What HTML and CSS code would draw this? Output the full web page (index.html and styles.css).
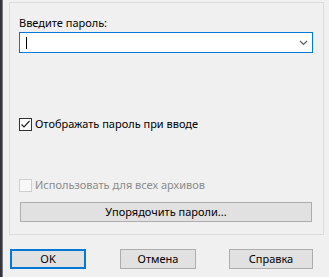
FILE: index.html
```html
<!DOCTYPE html>
<html>
    <head>
        <meta charset="UTF-8">
        <meta name="viewport" content="width=device-width, initial-scale=1.0">
        <link rel="stylesheet" href="styles.css">
    </head>
    <body>
        <div class="edge"></div>
        <div class="dialog">
            <div class="panel">
                <div class="label">Введите пароль:</div>
                <div class="combo">
                    <span class="caret"></span>
                    <svg class="chevron" width="9" height="6" viewBox="0 0 9 6">
                        <path d="M1 1 L4.5 4.5 L8 1" fill="none" stroke="#5a5a5a" stroke-width="1.1"/>
                    </svg>
                </div>
                <div class="checkRow">
                    <svg class="box" width="13" height="13" viewBox="0 0 13 13">
                        <rect x="0.5" y="0.5" width="12" height="12" fill="#fff" stroke="#333"/>
                        <path d="M2.5 6.5 L5 9 L10.5 3" fill="none" stroke="#222" stroke-width="1.2"/>
                    </svg>
                    <span>Отображать пароль при вводе</span>
                </div>
                <div class="checkRow disabled">
                    <svg class="box" width="13" height="13" viewBox="0 0 13 13">
                        <rect x="0.5" y="0.5" width="12" height="12" fill="#f7f7f7" stroke="#cfcfcf"/>
                    </svg>
                    <span>Использовать для всех архивов</span>
                </div>
                <button class="btn wide">Упорядочить пароли...</button>
            </div>
            <div class="actions">
                <button class="btn main">OK</button>
                <button class="btn cancel">Отмена</button>
                <button class="btn help">Справка</button>
            </div>
        </div>
    </body>
</html>
```

FILE: styles.css
```css
body {
    margin: 0;
    width: 329px;
    height: 277px;
    display: flex;
    background-color: #f0f0f0;
    font-family: "Noto Sans", "Open Sans", sans-serif;
    font-size: 11px;
    color: #000;
    overflow: hidden;
}

.edge {
    width: 2px;
    background-color: #35353b;
    border-right: 1px solid #7a7a80;
}

.dialog {
    flex: 1;
    padding: 2px 5px 0 6px;
}

.panel {
    box-sizing: border-box;
    height: 233px;
    border: 1px solid #dcdcdc;
    padding: 12px 0 0 9px;
}

.label {
    line-height: 15px;
}

.combo {
    box-sizing: border-box;
    margin-top: 2px;
    width: 294px;
    height: 21px;
    background-color: #fff;
    border: 1px solid #0078d7;
    display: flex;
    align-items: center;
    justify-content: space-between;
    padding: 0 4px 0 6px;
}

.caret {
    width: 1px;
    height: 12px;
    background-color: #000;
}

.checkRow {
    display: flex;
    align-items: flex-start;
    margin-top: 63px;
    line-height: 15px;
}

.checkRow .box {
    margin-top: 2px;
    margin-right: 3px;
    flex: none;
}

.disabled {
    margin-top: 46px;
    color: #8c8c8c;
}

.btn {
    box-sizing: border-box;
    height: 20px;
    padding: 0;
    background-color: #e1e1e1;
    border: 1px solid #adadad;
    border-radius: 0;
    font-family: "Noto Sans", "Open Sans", sans-serif;
    font-size: 11px;
    line-height: 16px;
    color: #000;
}

.wide {
    display: block;
    margin: 10px 0 0 1px;
    width: 292px;
}

.actions {
    display: flex;
    margin-top: 14px;
    padding-left: 1px;
}

.main {
    width: 76px;
    border: 2px solid #0078d7;
}

.cancel {
    width: 76px;
    margin-left: 34px;
}

.help {
    width: 84px;
    margin-left: 33px;
}
```
